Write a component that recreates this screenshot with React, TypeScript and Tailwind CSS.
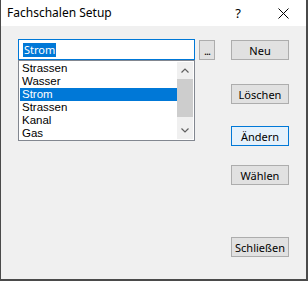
export default function App() {
  const items = ['Strassen', 'Wasser', 'Strom', 'Strassen', 'Kanal', 'Gas'];
  const buttons: { label: string; mt: string; focus?: boolean }[] = [
    { label: 'Neu', mt: 'mt-[14px]' },
    { label: 'Löschen', mt: 'mt-[24px]' },
    { label: 'Ändern', mt: 'mt-[22px]', focus: true },
    { label: 'Wählen', mt: 'mt-[19px]' },
    { label: 'Schließen', mt: 'mt-[52px]' },
  ];

  return (
    <div
      className="w-[308px] h-[281px] flex flex-col bg-[#f0f0f0] border-l border-r-2 border-b-2 border-[#4a4a4a] text-[#000] overflow-hidden"
      style={{ fontFamily: '"Noto Sans", "Liberation Sans", sans-serif' }}
    >
      {/* Title bar */}
      <div className="h-[26px] bg-white flex items-center pl-[6px] shrink-0">
        <span className="text-[12px] leading-[14px]">Fachschalen Setup</span>
        <span className="ml-auto mr-[37px] text-[13px] leading-[14px]">?</span>
        <svg width="11" height="11" viewBox="0 0 11 11" className="mr-[17px]">
          <path d="M0.5 0.5 L10.5 10.5 M10.5 0.5 L0.5 10.5" stroke="#000" strokeWidth="1" />
        </svg>
      </div>

      {/* Body */}
      <div className="flex flex-1">
        {/* Left column */}
        <div className="ml-[17px] mt-[13px] flex flex-col">
          <div className="flex items-start">
            <div className="w-[177px] h-[21px] bg-white border border-[#0078d7] flex items-center pl-[4px]">
              <span className="bg-[#0078d7] text-white text-[11px] leading-[14px] px-[1px]">Strom</span>
            </div>
            <div className="ml-[4px] mt-[1px] w-[16px] h-[20px] bg-[#e1e1e1] border border-[#adadad] flex items-end justify-center pb-[3px]">
              <span className="text-[11px] leading-[11px] tracking-[-1px]">...</span>
            </div>
          </div>

          {/* List box */}
          <div className="w-[177px] h-[81px] bg-white border border-[#828790] flex p-[1px]">
            <div className="flex-1 flex flex-col" style={{ fontFamily: '"Liberation Sans", sans-serif' }}>
              {items.map((item, i) => (
                <div
                  key={i}
                  className={
                    'h-[13px] pl-[2px] text-[11.5px] leading-[13px] ' +
                    (i === 2 ? 'bg-[#0078d7] text-white' : '')
                  }
                >
                  {item}
                </div>
              ))}
            </div>
            {/* Scrollbar */}
            <div className="w-[16px] bg-[#f0f0f0] flex flex-col">
              <div className="h-[17px] flex items-center justify-center">
                <svg width="8" height="5" viewBox="0 0 8 5">
                  <path d="M0.5 4.5 L4 1 L7.5 4.5" stroke="#606060" strokeWidth="1.2" fill="none" />
                </svg>
              </div>
              <div className="h-[38px] bg-[#cdcdcd]" />
              <div className="flex-1" />
              <div className="h-[17px] flex items-center justify-center">
                <svg width="8" height="5" viewBox="0 0 8 5">
                  <path d="M0.5 0.5 L4 4 L7.5 0.5" stroke="#606060" strokeWidth="1.2" fill="none" />
                </svg>
              </div>
            </div>
          </div>
        </div>

        {/* Right column */}
        <div className="ml-[16px] flex flex-col">
          {buttons.map((b) => (
            <div
              key={b.label}
              className={
                b.mt +
                ' w-[58px] h-[20px] flex items-center justify-center text-[11px] leading-[13px] border ' +
                (b.focus ? 'bg-[#e5f1fb] border-[#0078d7]' : 'bg-[#e1e1e1] border-[#adadad]')
              }
            >
              {b.label}
            </div>
          ))}
        </div>
      </div>
    </div>
  );
}
